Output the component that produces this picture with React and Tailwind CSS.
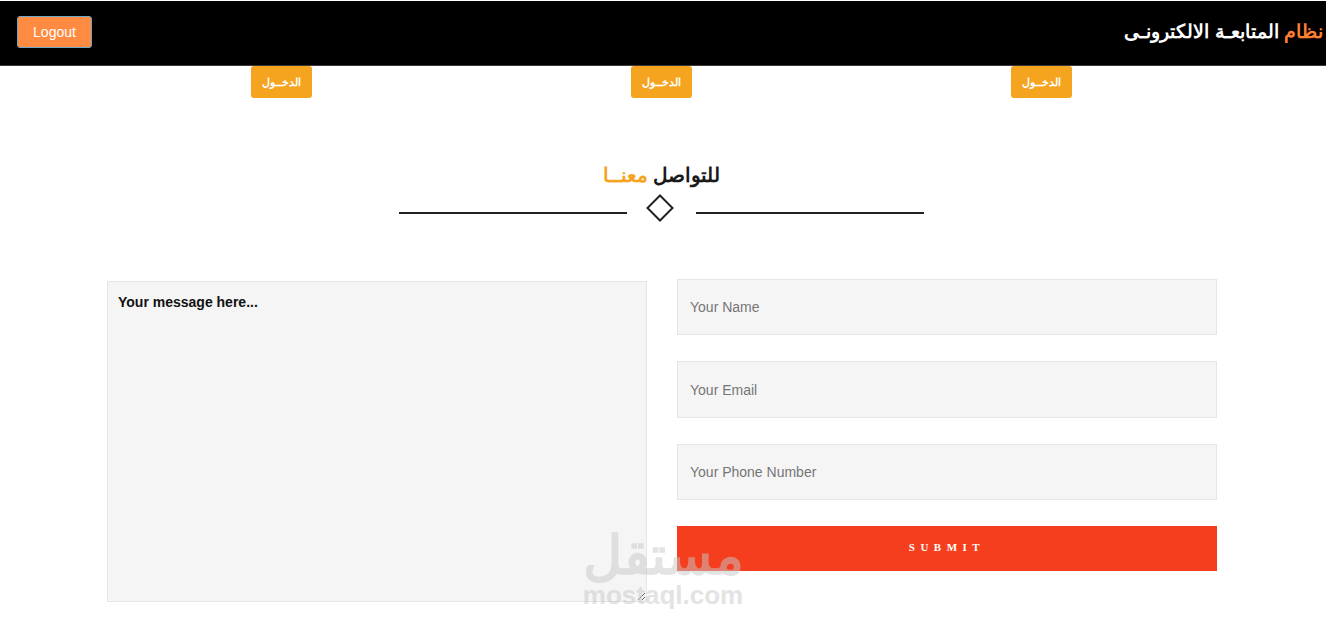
// App.jsx — follow-up system contact page: header, login buttons, contact form.

const LoginButton = () => (
  <div className="flex justify-center">
    <button className="w-[61px] h-8 rounded-[3px] bg-[#f4a41e] text-white text-[11px] font-bold">الدخــول</button>
  </div>
);

const inputClass =
  "w-full border border-[#e6e6e6] bg-[#f5f5f5] px-3 text-sm text-[#333] placeholder:text-[#757575] outline-none";

export default function App() {
  return (
    <div className="relative h-[618px] overflow-hidden bg-white font-['Liberation_Sans','Noto_Sans',sans-serif]">
      {/* Header */}
      <header dir="rtl" className="mt-px flex h-[65px] items-center justify-between border-b border-[#3a3a3a] bg-black pr-[3px] pl-[17px]">
        <h1 className="mb-0.5 text-[19px] font-bold text-white">
          <span className="text-[#ff7f32]">نظام</span> المتابعـة الالكترونـى
        </h1>
        <button className="mb-0.5 h-8 w-[75px] rounded-[3px] border border-[#6fa8c8] bg-[#ff8a41] text-sm text-white">Logout</button>
      </header>

      {/* Login buttons */}
      <div className="ml-[91px] grid w-[1141px] grid-cols-3">
        <LoginButton />
        <LoginButton />
        <LoginButton />
      </div>

      {/* Section title */}
      <div className="mt-[63px] ml-[399px] w-[525px]">
        <h2 dir="rtl" className="text-center text-xl leading-[28px] font-bold text-[#1a1a1a]">
          للتواصل <span className="text-[#f4a41e]">معنــا</span>
        </h2>
        <div className="mt-[5px] flex items-center">
          <div className="mt-[10px] h-0.5 w-[228px] bg-[#222]" />
          <svg className="mx-[19px] shrink-0" width="31" height="28" viewBox="0 0 31 28" fill="none">
            <path d="M14 1.5 L26.5 14 L14 26.5 L1.5 14 Z" stroke="#222" strokeWidth="2" />
          </svg>
          <div className="mt-[10px] h-0.5 flex-1 bg-[#222]" />
        </div>
      </div>

      {/* Contact form */}
      <form className="mt-[57px] ml-[107px] flex w-[1110px] gap-[30px]">
        <textarea
          placeholder="Your message here..."
          className="mt-0.5 h-[321px] w-[540px] border border-[#e6e6e6] bg-[#f5f5f5] px-2.5 py-2.5 text-sm font-bold outline-none placeholder:text-[#111]"
        />
        <div className="flex w-[540px] flex-col">
          <input placeholder="Your Name" className={`${inputClass} h-14`} />
          <input placeholder="Your Email" className={`${inputClass} mt-[26px] h-[57px]`} />
          <input placeholder="Your Phone Number" className={`${inputClass} mt-[26px] h-14`} />
          <button type="button" className="mt-[26px] h-[45px] bg-[#f53e1e] pb-0.5 font-['Liberation_Serif',serif] text-[11px] font-bold tracking-[0.5em] text-white">
            SUBMIT
          </button>
        </div>
      </form>

      {/* Watermark */}
      <div className="pointer-events-none absolute top-[527px] left-[582px] flex w-[162px] flex-col items-center text-[#c8c8c8] opacity-50">
        <span dir="rtl" className="text-[54px] leading-[56px] font-bold">مستقل</span>
        <span className="text-[26px] leading-[24px] font-bold">mostaql.com</span>
      </div>
    </div>
  );
}
